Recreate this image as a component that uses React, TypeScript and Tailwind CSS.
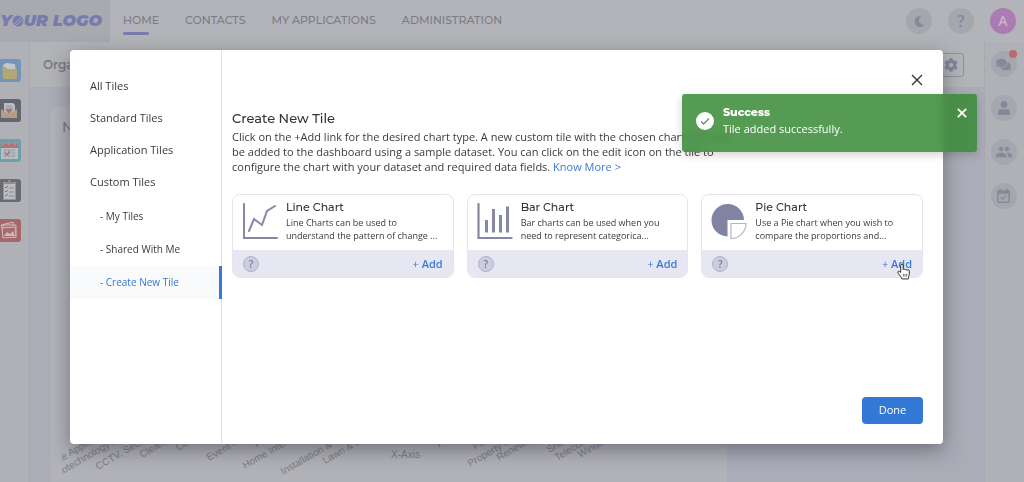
import type { ReactNode } from "react";
import { FaCog, FaComments, FaMoon, FaUser } from "react-icons/fa";
import { MdEventAvailable, MdGroup } from "react-icons/md";

const HEADING = "font-['Montserrat','Inter',sans-serif]";

const NAV = ["HOME", "CONTACTS", "MY APPLICATIONS", "ADMINISTRATION"];

type AxisLabel = { text: string; x: number; y: number };

const AXIS_LABELS: AxisLabel[] = [
  { text: "Home Appliances", x: -17, y: 71 },
  { text: "Biotechnology AI", x: -6, y: 78 },
  { text: "CCTV, Security", x: 36, y: 70 },
  { text: "Cleaning", x: 80, y: 58 },
  { text: "Construction", x: 116, y: 51 },
  { text: "Event Mgmt", x: 147, y: 61 },
  { text: "Fitness", x: 195, y: 48 },
  { text: "Home Interior", x: 183, y: 69 },
  { text: "Installation & Maint", x: 221, y: 75 },
  { text: "Lawn & Landscape", x: 263, y: 64 },
  { text: "Pest", x: 377, y: 48 },
  { text: "Pool", x: 413, y: 50 },
  { text: "Property Mgmt", x: 408, y: 67 },
  { text: "Renewable", x: 437, y: 61 },
  { text: "Snow", x: 487, y: 53 },
  { text: "Telecom", x: 495, y: 61 },
  { text: "Window", x: 518, y: 58 },
];

function FolderArt() {
  return (
    <svg viewBox="0 0 21 23" className="h-[23px] w-[21px]" aria-hidden="true">
      <path d="M3 6l3-2 9 1 1 8H4z" fill="#c3c6ca" />
      <path d="M2 9q0-1 1-1h3l1 2h9q1 0 1 1v8q0 1-1 1H4q-1 0-1-1z" fill="#b0a676" />
    </svg>
  );
}

function MailArt() {
  return (
    <svg viewBox="0 0 21 23" className="h-[23px] w-[21px]" aria-hidden="true">
      <path d="M4 4h9l2 2v9H4z" fill="#bcbdc1" />
      <path d="M6 7h6M6 9h7" stroke="#94969b" />
      <path d="M1 10l8 5 8-5v9H1z" fill="#b39c83" />
      <path d="M5 10h8l-4 5z" fill="#a97376" />
    </svg>
  );
}

function CalendarArt() {
  return (
    <svg viewBox="0 0 21 23" className="h-[23px] w-[21px]" aria-hidden="true">
      <path d="M1 5h17v15H1z" fill="#b9bec2" />
      <path d="M1 5h17v4H1z" fill="#ae7377" />
      <path d="M3 3v4M9 3v4M15 3v4" stroke="#bd8b8e" strokeWidth="1.5" />
      <path d="M3 11h13M3 14h13M3 17h13M5 10v9M9 10v9M13 10v9" stroke="#8da0a6" strokeWidth=".8" />
      <path d="M5 14l2 2 3-4" fill="none" stroke="#ae6870" strokeWidth="1.2" />
    </svg>
  );
}

function ChecklistArt() {
  return (
    <svg viewBox="0 0 21 23" className="h-[23px] w-[21px]" aria-hidden="true">
      <path d="M3 3h13v18H3z" fill="#a1937f" />
      <path d="M4 5h11v15H4z" fill="#bbbcc0" />
      <path d="M6 3h7v2H6zM8 1h3v2H8z" fill="#8b8d92" />
      <path d="M5 8l1 1 2-2M5 12l1 1 2-2M5 16l1 1 2-2" fill="none" stroke="#a9656d" />
      <path d="M9 9h5M9 13h5M9 17h5" stroke="#8b8d92" />
    </svg>
  );
}

function PhotosArt() {
  return (
    <svg viewBox="0 0 21 23" className="h-[23px] w-[21px]" aria-hidden="true">
      <path d="M1 6l12-3 3 10-12 4z" fill="#a87879" stroke="#c3bcc0" />
      <path d="M3 6l13 0 0 12-13 0z" fill="#ab7678" stroke="#c3bcc0" />
      <path d="M2 9l13-1 1 10-13 1z" fill="#a96c6e" stroke="#c3bcc0" />
      <path d="M4 17l3-4 3 2 3-3 2 5z" fill="#c3bcc0" />
    </svg>
  );
}

const APPS: { name: string; tone: string; art: ReactNode }[] = [
  { name: "Files", tone: "bg-[#7295b8]", art: <FolderArt /> },
  { name: "Mail", tone: "bg-[#63656f]", art: <MailArt /> },
  { name: "Calendar", tone: "bg-[#719fa8]", art: <CalendarArt /> },
  { name: "Tasks", tone: "bg-[#6a6b70]", art: <ChecklistArt /> },
  { name: "Photos", tone: "bg-[#a86567]", art: <PhotosArt /> },
];

function Round({ label, children }: { label: string; children: ReactNode }) {
  return (
    <button
      aria-label={label}
      className="relative flex size-[26px] shrink-0 items-center justify-center rounded-full bg-[#a6a7ae] text-[#868899]"
    >
      {children}
    </button>
  );
}

function Header() {
  return (
    <header className="flex h-[42px] items-center bg-[#b3b4b9] shadow-[0_1px_2px_rgba(80,80,95,0.2)]">
      <a
        href="#home"
        className={`flex h-full w-[110px] shrink-0 items-center justify-end overflow-hidden bg-[#a9aab0] pr-2 text-base font-black whitespace-nowrap text-[#777bad] italic ${HEADING}`}
      >
        Y
        <svg viewBox="0 0 12 12" className="size-3 shrink-0" role="img" aria-label="O">
          <circle cx="6" cy="6" r="5.5" fill="#777bad" />
          <path d="M1 10L11 1M3 11L12 4" stroke="#a9aab0" strokeWidth=".9" />
        </svg>
        UR LOGO
      </a>
      <nav className={`ml-[13px] flex h-full gap-[26px] text-[11px] font-medium text-[#7b7c82] ${HEADING}`}>
        {NAV.map((item, i) => (
          <a key={item} href="#nav" className="flex flex-col pt-3 leading-4 whitespace-nowrap">
            {item}
            {i === 0 && <span className="mt-1 h-[3px] w-[26px] rounded-full bg-[#777bad]" />}
          </a>
        ))}
      </nav>
      <div className="mr-2 ml-auto flex gap-4">
        <Round label="Dark mode">
          <FaMoon size={11} />
        </Round>
        <Round label="Help">
          <span className="text-base leading-none font-semibold">?</span>
        </Round>
        <button
          aria-label="Account"
          className="size-[26px] rounded-full bg-[#ab7bb4] text-sm font-semibold text-[#c6b5cb]"
        >
          A
        </button>
      </div>
    </header>
  );
}

function Dashboard() {
  return (
    <div className="flex min-h-0 flex-1">
      <aside className="flex w-[30px] shrink-0 flex-col gap-[17px] border-r border-[#a8a9ae] bg-[#b0b1b6] pt-[17px]">
        {APPS.map((app) => (
          <button key={app.name} aria-label={app.name} className={`h-[23px] w-[21px] rounded-r-[3px] ${app.tone}`}>
            {app.art}
          </button>
        ))}
      </aside>
      <main className="flex min-w-0 flex-1 flex-col bg-[#abacb8]">
        <div className="flex h-[45px] shrink-0 items-center justify-between bg-[#b3b4b8] pr-5 pl-[13px]">
          <h1 className={`text-xs font-semibold text-[#797a80] ${HEADING}`}>Organization</h1>
          <button
            aria-label="Settings"
            className="flex h-6 w-[26px] items-center justify-center rounded-[3px] border border-[#8f9098] text-[#82849a]"
          >
            <FaCog size={14} />
          </button>
        </div>
        <section className="mt-5 mr-[257px] ml-5 flex min-h-0 flex-1 flex-col justify-between overflow-hidden rounded-tl-md bg-[#b2b3b8] pl-3">
          <h2 className={`pt-2.5 text-sm leading-5 font-medium text-[#797a80] ${HEADING}`}>New</h2>
          <svg width="660" height="82" className="shrink-0 font-['Liberation_Sans',Arial,sans-serif] text-[10px]" role="img" aria-label="Category axis">
            <g fill="#7c7d82">
              {AXIS_LABELS.map((l) => (
                <text key={l.text} transform={`translate(${l.x} ${l.y}) rotate(-30)`}>
                  {l.text}
                </text>
              ))}
              <text x="329" y="58">
                X-Axis
              </text>
            </g>
          </svg>
        </section>
      </main>
      <aside className="flex w-10 shrink-0 flex-col items-center gap-[18px] border-l border-[#a8a9ae] bg-[#b0b1b6] pt-[9px] pr-0.5">
        <Round label="Messages">
          <FaComments size={15} />
          <span className="absolute -top-px right-0 size-2 rounded-full bg-[#b9696f]" />
        </Round>
        <Round label="Profile">
          <FaUser size={14} />
        </Round>
        <Round label="Groups">
          <MdGroup size={18} />
        </Round>
        <Round label="Events">
          <MdEventAvailable size={17} />
        </Round>
      </aside>
    </div>
  );
}

function LineArt() {
  return (
    <svg viewBox="0 0 36 36" className="size-9 shrink-0" fill="none" stroke="#8688a6" strokeWidth="2" strokeLinecap="round" aria-hidden="true">
      <path d="M2 1v34h33" />
      <path d="M7 28l5-12 8 6 5-14 8-5" />
    </svg>
  );
}

function BarArt() {
  return (
    <svg viewBox="0 0 36 36" className="size-9 shrink-0" fill="none" stroke="#8688a6" aria-hidden="true">
      <path d="M1.500 1v34h33" strokeWidth="2.2" strokeLinecap="round" />
      <path d="M9.500 17v12.500M16.500 6v23.500M23.500 12v17.500M30.500 3.500v26" strokeWidth="3" />
    </svg>
  );
}

function PieArt() {
  return (
    <svg viewBox="0 0 36 36" className="size-9 shrink-0" aria-hidden="true">
      <path d="M16.500 33.500A16.250 16.250 0 1 1 33 17H16.500z" fill="#8183a2" />
      <path d="M20 20.500h15A15 15 0 0 1 20 35.500z" fill="#fff" stroke="#b5b6cc" strokeWidth="1.200" />
    </svg>
  );
}

const TILES = [
  { title: "Line Chart", lines: ["Line Charts can be used to", "understand the pattern of change ..."], art: <LineArt /> },
  { title: "Bar Chart", lines: ["Bar charts can be used when you", "need to represent categorica..."], art: <BarArt /> },
  { title: "Pie Chart", lines: ["Use a Pie chart when you wish to", "compare the proportions and..."], art: <PieArt /> },
];

function Pointer() {
  return (
    <svg viewBox="0 0 14 18" className="pointer-events-none absolute right-0.5 -bottom-2 h-[17px] w-[13px]" aria-hidden="true">
      <path
        d="M4 10V2.500a1.300 1.300 0 0 1 2.600 0V7a1.200 1.200 0 0 1 2.200.3 1.200 1.200 0 0 1 2.200.6 1.100 1.100 0 0 1 2.200.7V12c0 1.500-1 2.500-1 5H5.200C5 15 2.500 13 1 10.500.4 9 2 8.300 2.800 9.200z"
        fill="#fff"
        stroke="#222"
        strokeWidth="1"
        strokeLinejoin="round"
      />
      <path d="M6.800 11.500v3M8.600 11.500v3M10.400 11.500v3" stroke="#222" strokeWidth=".7" />
    </svg>
  );
}

function TileCard({ tile, hovered }: { tile: (typeof TILES)[number]; hovered: boolean }) {
  return (
    <article className="rounded-lg border border-[#e4e4ea] bg-white">
      <div className="flex h-[55px] gap-2 pt-2 pl-[9px]">
        {tile.art}
        <div className="min-w-0 whitespace-nowrap">
          <h3 className={`-mt-1 text-[11px] leading-4 font-medium text-[#333] ${HEADING}`}>{tile.title}</h3>
          <p className="mt-px text-[9px] leading-[13px]">
            {tile.lines[0]}
            <br />
            {tile.lines[1]}
          </p>
        </div>
      </div>
      <div className="flex h-[27px] items-center justify-between rounded-b-[7px] bg-[#e6e7f3] px-2.5">
        <button
          aria-label={`About ${tile.title}`}
          className="size-4 rounded-full border border-[#b0b1c6] bg-[#cccdde] text-[10px] leading-none font-semibold text-[#77799a]"
        >
          ?
        </button>
        <button className="relative text-[11px] leading-4 font-semibold text-[#3b7ad6]">
          <span className="font-normal">+</span> Add
          {hovered && <Pointer />}
        </button>
      </div>
    </article>
  );
}

function Cross({ className, weight }: { className: string; weight: number }) {
  return (
    <svg viewBox="0 0 12 12" className={className} fill="none" stroke="currentColor" strokeWidth={weight} aria-hidden="true">
      <path d="M1 1l10 10M11 1L1 11" />
    </svg>
  );
}

function TileDialog() {
  return (
    <div className="fixed inset-0 pt-[50px] pr-[81px] pb-[38px] pl-[70px]">
      <div
        role="dialog"
        aria-labelledby="dialog-title"
        className="flex h-full rounded bg-white shadow-[0_6px_20px_rgba(50,50,60,0.5)]"
      >
        <nav className="w-[152px] shrink-0 border-r border-[#e2e2e4] pt-5 text-[11px]">
          {["All Tiles", "Standard Tiles", "Application Tiles", "Custom Tiles"].map((t) => (
            <a key={t} href="#tiles" className="flex h-8 items-center pl-5">
              {t}
            </a>
          ))}
          <div className="mt-0.5 -mr-px text-[10px]">
            <a href="#mine" className="flex h-[33px] items-center pl-[30px]">
              - My Tiles
            </a>
            <a href="#shared" className="flex h-[33px] items-center pl-[30px]">
              - Shared With Me
            </a>
            <a
              href="#create"
              aria-current="page"
              className="flex h-[33px] items-center border-r-[3px] border-[#3578d6] bg-[#f9fafc] pl-[30px] text-[#3578d6]"
            >
              - Create New Tile
            </a>
          </div>
        </nav>
        <section className="flex min-w-0 flex-1 flex-col pt-6 pr-5 pb-5 pl-2.5">
          <button aria-label="Close" className="self-end text-[#333]">
            <Cross className="size-3" weight={1.4} />
          </button>
          <h2 id="dialog-title" className={`mt-6 text-[13px] leading-4 font-medium text-[#333] ${HEADING}`}>
            Create New Tile
          </h2>
          <p className="mt-[3px] max-w-[500px] text-[11px] leading-[15px]">
            Click on the +Add link for the desired chart type. A new custom tile with the chosen chart type will be
            added to the dashboard using a sample dataset. You can click on the edit icon on the tile to configure the
            chart with your dataset and required data fields.{" "}
            <a href="#more" className="text-[#3b7ad6]">
              Know More &gt;
            </a>
          </p>
          <div className="mt-5 grid grid-cols-3 gap-[13px]">
            {TILES.map((tile, i) => (
              <TileCard key={tile.title} tile={tile} hovered={i === 2} />
            ))}
          </div>
          <button className="mt-auto h-[27px] w-[61px] self-end rounded-sm bg-[#3478d6] text-[11px] text-white">
            Done
          </button>
        </section>
      </div>
    </div>
  );
}

function Toast() {
  return (
    <div
      role="status"
      className="fixed top-[94px] right-[47px] flex h-[58px] w-[295px] items-start rounded-[3px] bg-[#388936]/85 pt-2.5 pr-2.5 pl-3.5 text-white shadow-[0_3px_10px_rgba(0,0,0,0.18)] backdrop-blur-[4px]"
    >
      <svg viewBox="0 0 18 18" className="mt-2 size-[18px]" aria-hidden="true">
        <circle cx="9" cy="9" r="9" fill="#fff" />
        <path d="M5 9.500l2.500 2.500L13 6.500" fill="none" stroke="#569b54" strokeWidth="1.300" />
      </svg>
      <div className="ml-[9px] flex-1">
        <p className={`text-[11px] leading-4 font-extrabold ${HEADING}`}>Success</p>
        <p className="text-[11px] leading-[18px]">Tile added successfully.</p>
      </div>
      <button aria-label="Dismiss" className="mt-1">
        <Cross className="size-2.5" weight={2.2} />
      </button>
    </div>
  );
}

export default function App() {
  return (
    <div className="flex h-screen flex-col overflow-hidden bg-[#b3b4b8] font-['Open_Sans','Noto_Sans',sans-serif] text-[#3a3a3c]">
      <Header />
      <Dashboard />
      <TileDialog />
      <Toast />
    </div>
  );
}
